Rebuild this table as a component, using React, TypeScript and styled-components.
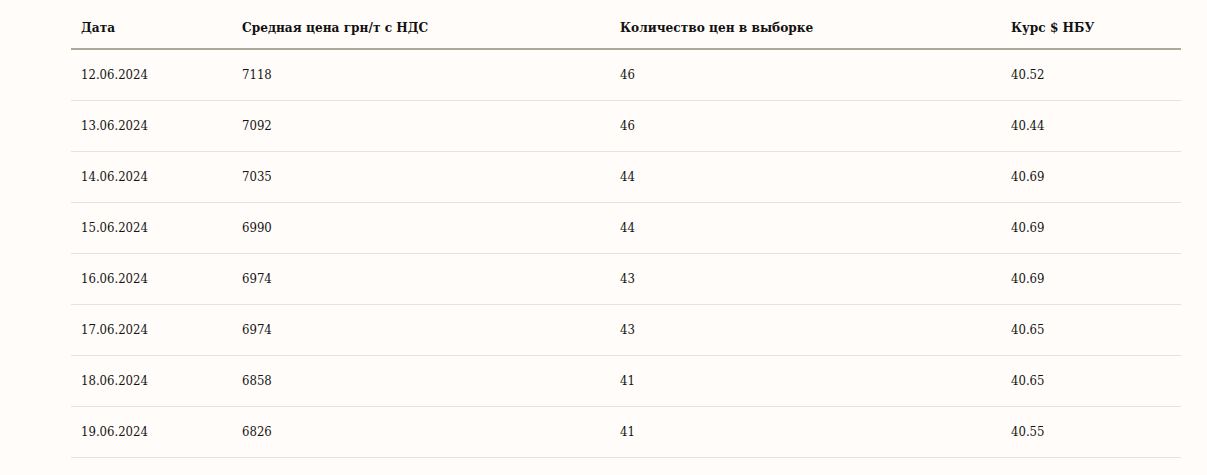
import React from 'react';
import styled, { createGlobalStyle } from 'styled-components';

const GlobalStyle = createGlobalStyle`
  html, body {
    margin: 0;
    padding: 0;
    background: #fffcf9;
  }
  body {
    font-family: "DejaVu Serif", "Liberation Serif", serif;
    color: #141414;
  }
`;

const Wrap = styled.div`
  padding: 7px 26px 0 71px;
`;

const Table = styled.table`
  width: 1110px;
  border-collapse: collapse;
  table-layout: fixed;
  font-size: 13px;
  font-stretch: condensed;
`;

const Th = styled.th<{ $w: number }>`
  width: ${({ $w }) => $w}px;
  text-align: left;
  font-weight: 700;
  font-size: 13.5px;
  padding: 12px 10px 12px;
  line-height: 17px;
  border-bottom: 2px solid #a9aa97;
  color: #111;
`;

const Td = styled.td`
  padding: 0 10px 2px;
  height: 48px;
  line-height: 17px;
  border-bottom: 1px solid #e6e3de;
  font-weight: 400;
`;

const columns = [
  { title: 'Дата', w: 141 },
  { title: 'Средная цена грн/т с НДС', w: 358 },
  { title: 'Количество цен в выборке', w: 371 },
  { title: 'Курс $ НБУ', w: 160 },
];

const rows = [
  ['12.06.2024', '7118', '46', '40.52'],
  ['13.06.2024', '7092', '46', '40.44'],
  ['14.06.2024', '7035', '44', '40.69'],
  ['15.06.2024', '6990', '44', '40.69'],
  ['16.06.2024', '6974', '43', '40.69'],
  ['17.06.2024', '6974', '43', '40.65'],
  ['18.06.2024', '6858', '41', '40.65'],
  ['19.06.2024', '6826', '41', '40.55'],
];

export default function App() {
  return (
    <>
      <GlobalStyle />
      <Wrap>
        <Table>
          <thead>
            <tr>
              {columns.map(c => (
                <Th key={c.title} $w={c.w}>{c.title}</Th>
              ))}
            </tr>
          </thead>
          <tbody>
            {rows.map(r => (
              <tr key={r[0]}>
                {r.map((v, i) => <Td key={i}>{v}</Td>)}
              </tr>
            ))}
          </tbody>
        </Table>
      </Wrap>
    </>
  );
}
